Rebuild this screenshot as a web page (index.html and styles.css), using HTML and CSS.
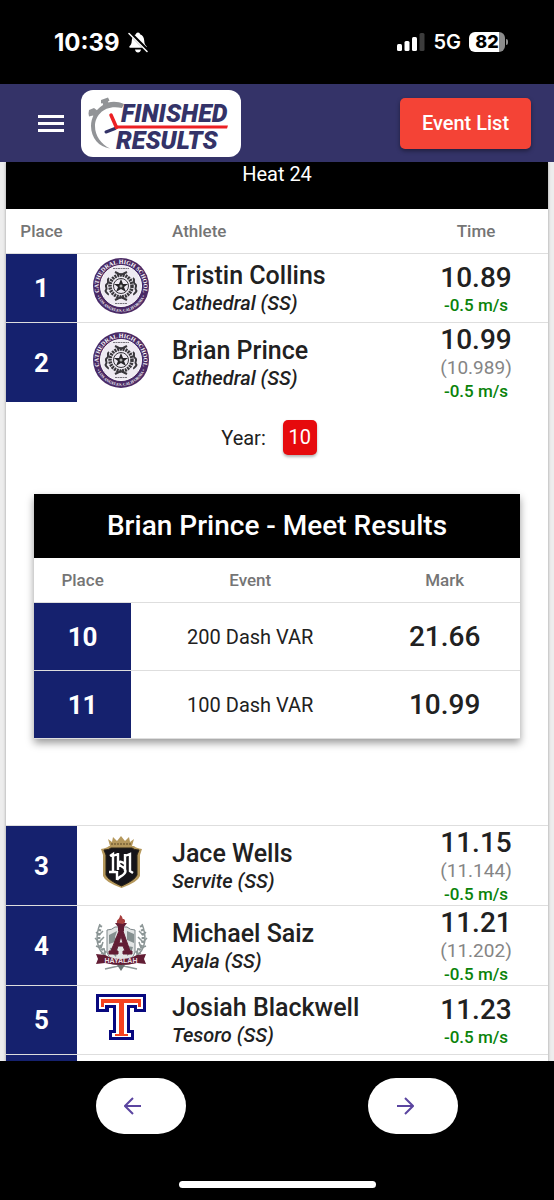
FILE: index.html
```html
<!DOCTYPE html>
<html lang="en">
<head>
<meta charset="utf-8">
<meta name="viewport" content="width=device-width, initial-scale=1">
<title>Finished Results</title>
<link rel="stylesheet" href="styles.css">
</head>
<body class="app">
<div class="status">
  <div class="status-side">
    <span class="clock">10:39</span>
    <svg class="bell" viewBox="0 0 20 21" aria-hidden="true">
      <path fill="#fff" d="M10 0.500c1.400 0 1.800.8 2 1.700 3 1 4 3.300 4.200 6.300.2 3.500 1 4.300 2.300 5.700.5.7.2 1.500-.7 1.500H2.200c-.9 0-1.200-.8-.7-1.500C2.800 12.800 3.600 12 3.800 8.500 4 5.500 5 3.200 8 2.200c.2-.9.600-1.700 2-1.700zM7 17.500h6c-.3 2-1.500 3-3 3s-2.700-1-3-3z"/>
      <path stroke="#000" stroke-width="3.500" d="M1 0l19 19"/>
      <path stroke="#fff" stroke-width="1.500" stroke-linecap="round" d="M1 1.500l18 18"/>
    </svg>
  </div>
  <div class="status-side">
    <svg class="signal" viewBox="0 0 28 18" aria-hidden="true">
      <g fill="#fff"><rect y="11" width="5" height="7" rx="1.500"/><rect x="7.500" y="8" width="5" height="10" rx="1.500"/><rect x="15" y="4" width="5" height="14" rx="1.500"/></g>
      <rect x="22.500" width="5" height="18" rx="1.500" fill="#3c3c3c"/>
    </svg>
    <span class="network">5G</span>
    <span class="battery"><span class="battery-level">82</span></span>
  </div>
</div>
<header class="topbar">
  <button class="menu" aria-label="Menu"><span></span><span></span><span></span></button>
  <a class="brand" href="#" aria-label="Finished Results">
    <svg class="brand-art" viewBox="0 0 160 67">
      <path fill="#929497" d="M43 14C36 11 28 11 22 15 14 20 10 28 10 36c0 12 8 21 19 22.500C20 54 14 46 14 36 14 25 24 14 41 18z"/>
      <path fill="#929497" d="M20 10l7-2.500 1.500 3-1.500 1 1 4-5 2-1.500-4.500-1.500.500zM8 20l5-2 2 1.500 3 2.500-4 5-2-1.500-4 1-.5-3z"/>
      <path stroke="#343368" stroke-width="3" stroke-linecap="round" d="M25 42l9-3.500"/>
      <path fill="none" stroke="#ec2024" stroke-width="3.500" stroke-linecap="round" d="M30 25l5.500 12.500"/>
      <path fill="#ec2024" d="M34 35.500h113l-1 3H34z"/>
      <text class="brand-text" x="40" y="32">FINISHED</text>
      <text class="brand-text" x="35" y="59">RESULTS</text>
    </svg>
  </a>
  <button class="event-list">Event List</button>
</header>
<main class="content">
  <section class="card">
    <h1 class="heat">Heat 24</h1>
    <table class="results">
      <colgroup><col class="col-place"><col class="col-logo"><col><col class="col-time"></colgroup>
      <thead><tr><th>Place</th><th></th><th class="left">Athlete</th><th>Time</th></tr></thead>
      <tbody>
      <tr class="row">
        <td class="place">1</td>
        <td class="logo"><svg viewBox="0 0 56 56" role="img" aria-label="Cathedral High School">
          <defs><g id="cathedral">
            <path id="arc-top" fill="none" d="M6.500 35A22.500 22.500 0 1 1 49.500 35"/>
            <path id="arc-bottom" fill="none" d="M3 35A26 26 0 0 0 53 35"/>
            <circle cx="28" cy="28" r="28" fill="#4a2a65"/>
            <circle cx="28" cy="28" r="20.500" fill="#eeeaf2" stroke="#fff"/>
            <text class="seal-top"><textPath href="#arc-top" startOffset="50%">CATHEDRAL HIGH SCHOOL</textPath></text>
            <text class="seal-bottom"><textPath href="#arc-bottom" startOffset="50%">• LOS ANGELES, CALIFORNIA •</textPath></text>
            <g fill="none" stroke="#39373c">
              <path stroke="#77747c" stroke-dasharray="2 .5" d="M20 10.500h16M22 45.500h12"/>
              <circle cx="28" cy="28" r="11" stroke-width="3.500" stroke-dasharray="2 .8"/>
              <circle cx="28" cy="28" r="7.500" stroke-width="1"/>
              <path stroke-width="2" d="M16 20c-3 2 1 4-2 6s1 4-1 6 3 3 2 5M40 20c3 2-1 4 2 6s-1 4 1 6-3 3-2 5M22 14l6 3 6-3M22 42l6-3 6 3"/>
            </g>
            <path fill="#262528" d="M28 21l2 5h5l-4 3 2 5-5-3-5 3 2-5-4-3h5z"/>
            <circle cx="28" cy="28" r="1.500" fill="#aaa"/>
          </g></defs>
          <use href="#cathedral"/>
        </svg></td>
        <td class="athlete"><div class="name">Tristin Collins</div><div class="school">Cathedral (SS)</div></td>
        <td class="time"><div class="mark">10.89</div><div class="wind">-0.5 m/s</div></td>
      </tr>
      <tr class="row open">
        <td class="place">2</td>
        <td class="logo"><svg viewBox="0 0 56 56" role="img" aria-label="Cathedral High School"><use href="#cathedral"/></svg></td>
        <td class="athlete"><div class="name">Brian Prince</div><div class="school">Cathedral (SS)</div></td>
        <td class="time"><div class="mark">10.99</div><div class="exact">(10.989)</div><div class="wind">-0.5 m/s</div></td>
      </tr>
      <tr>
        <td class="detail" colspan="4">
          <div class="year"><span>Year:</span><span class="badge">10</span></div>
          <section class="meet">
            <h2 class="meet-title">Brian Prince - Meet Results</h2>
            <table class="meet-table">
              <colgroup><col class="col-meet-place"><col><col class="col-mark"></colgroup>
              <thead><tr><th>Place</th><th>Event</th><th>Mark</th></tr></thead>
              <tbody>
                <tr><td class="place">10</td><td class="event">200 Dash VAR</td><td class="mark">21.66</td></tr>
                <tr><td class="place">11</td><td class="event">100 Dash VAR</td><td class="mark">10.99</td></tr>
              </tbody>
            </table>
          </section>
        </td>
      </tr>
      <tr class="row">
        <td class="place">3</td>
        <td class="logo"><svg viewBox="0 0 56 56" role="img" aria-label="Servite">
          <path fill="#b5985c" d="M17 11l-2-7 4 3 1-5 4 4 4-5 4 5 4-4 1 5 4-3-2 7z"/>
          <path stroke="#5c4824" stroke-dasharray="2 1" d="M18 9h20"/>
          <path fill="#b5985c" d="M8 14q6-1 8-3h25q2 2 8 3l-2 6v21q-2 6-18.500 12Q12 47 10 41V20z"/>
          <path fill="#151419" stroke="#292217" d="M11 15q5 0 7-2h21q2 2 7 2l-2 5v20q-2 5-15.500 11Q15 45 13 40V20z"/>
          <path fill="none" stroke="#fff" stroke-width="2.400" d="M17 21l3-2v18M16 37h7M25 18v17M20 21l5-2M32 19v17M32 21l5-2v17l3 2M32 29c-6-5-8 0-4 2s6 5 3 8-6 3-7 6M24 36v9"/>
        </svg></td>
        <td class="athlete"><div class="name">Jace Wells</div><div class="school">Servite (SS)</div></td>
        <td class="time"><div class="mark">11.15</div><div class="exact">(11.144)</div><div class="wind">-0.5 m/s</div></td>
      </tr>
      <tr class="row">
        <td class="place">4</td>
        <td class="logo"><svg viewBox="0 0 56 56" role="img" aria-label="Ayala">
          <g fill="none" stroke="#8c9696" stroke-width="1.500">
            <path d="M15 43C1 34 3 19 7 9M41 43C55 34 53 19 49 9"/>
            <path stroke-width="3" stroke-dasharray="2 2" d="M13 38C4 30 5 20 8 10M43 38c9-8 8-18 5-28"/>
            <path d="M3 17l3 3 4-4M2 23l4 4 5-5M3 31l5 2 2-6M8 38l4 1-1-6M53 17l-3 3-4-4M54 23l-4 4-5-5M53 31l-5 2-2-6M48 38l-4 1 1-6M13 47l31 7M43 47l-31 7"/>
          </g>
          <path fill="#e2e5e5" stroke="#7c8588" d="M14 15q5 0 8-3h12q3 3 8 3v22q-2 8-14 14-12-6-14-14z"/>
          <path fill="#859090" d="M16 20l8-4-2 6 3 4-9 3zM34 16l7 3v9l-7-3zM17 33l8-1-2 10-5-5zM34 31l6 1-2 6-4 3z"/>
          <path fill="#621d34" d="M26 16h4l7 20h2v3H30v-3h2l-2-5h-5l-2 5h2v3h-9v-3h2zm2 5l-2 7h4z" fill-rule="evenodd" stroke="#621d34" stroke-width="1"/>
          <path fill="#621d34" d="M22 8h12l-3 4v4h-6v-4z"/>
          <path fill="#a8403f" d="M24 8c-1-4 3-3 3-8 4 2 1 4 4 4 2 2 1 4-1 5z"/>
          <path fill="#621d34" d="M3 39l9 1 4 2q12 4 24 0l4-2 9-1-2 5 2 5-9-1q-16 4-32 0l-9 1 2-5z"/>
          <text class="ribbon" x="28" y="48">HAYALAH</text>
          <path fill="#6b7474" d="M24 50l4 6 4-6z"/>
        </svg></td>
        <td class="athlete"><div class="name">Michael Saiz</div><div class="school">Ayala (SS)</div></td>
        <td class="time"><div class="mark">11.21</div><div class="exact">(11.202)</div><div class="wind">-0.5 m/s</div></td>
      </tr>
      <tr class="row">
        <td class="place">5</td>
        <td class="logo"><svg viewBox="0 0 56 56" role="img" aria-label="Tesoro">
          <path fill="#08087f" d="M3 4h50v18H41v-4h-4v22h4v10H16V40h4V18h-4v4H3z"/>
          <path fill="#fff" d="M6 7h44v12h-6v-4H34v28h4v4H19v-4h4V15H12v4H6z"/>
          <path fill="#f5411e" d="M8 9h40v8h-3v-4H31v31h4v2H22v-2h4V13H11v4H8z"/>
        </svg></td>
        <td class="athlete"><div class="name">Josiah Blackwell</div><div class="school">Tesoro (SS)</div></td>
        <td class="time"><div class="mark">11.23</div><div class="wind">-0.5 m/s</div></td>
      </tr>
      <tr class="row"><td class="place"></td><td></td><td></td><td></td></tr>
      </tbody>
    </table>
  </section>
</main>
<footer class="bottom">
  <nav class="pager">
    <button class="page-button" aria-label="Previous"><svg viewBox="0 0 18 18"><path d="M17 9H2M9 1L1 9l8 8"/></svg></button>
    <button class="page-button" aria-label="Next"><svg viewBox="0 0 18 18"><path d="M1 9h15M9 1l8 8-8 8"/></svg></button>
  </nav>
  <div class="home-bar"></div>
</footer>
</body>
</html>
```
FILE: styles.css
```css
* { box-sizing: border-box; }

.app {
  margin: 0;
  height: 100vh;
  display: flex;
  flex-direction: column;
  overflow: hidden;
  background: #000;
  color: #212121;
  font-family: Roboto, "Liberation Sans", sans-serif;
  font-size: 20px;
}

button { border: 0; padding: 0; font: inherit; cursor: pointer; }
table { width: 100%; border-collapse: separate; border-spacing: 0; table-layout: fixed; }
th, td { padding: 0; border-bottom: 1px solid #dedede; text-align: center; vertical-align: middle; }

/* Phone status bar */
.status {
  flex: none;
  height: 84px;
  padding: 0 49px 0 54px;
  display: flex;
  align-items: center;
  justify-content: space-between;
  color: #fff;
  font-family: Inter, sans-serif;
}
.status-side { display: flex; align-items: center; gap: 8px; }
.clock { font-size: 24px; font-weight: 700; }
.bell { width: 20px; height: 21px; }
.signal { width: 28px; height: 18px; }
.network { font-weight: 600; }
.battery {
  position: relative;
  width: 36px;
  height: 20px;
  border-radius: 6px;
  background: linear-gradient(90deg, #fff 82%, #8c8c8c 82%);
  color: #000;
  text-align: center;
}
.battery-level { display: block; font-size: 18px; line-height: 20px; font-weight: 800; }
.battery::after {
  content: "";
  position: absolute;
  left: 100%;
  top: 7px;
  width: 2px;
  height: 6px;
  margin-left: 1px;
  border-radius: 0 2px 2px 0;
  background: #8c8c8c;
}

/* App bar */
.topbar {
  flex: none;
  height: 78px;
  padding: 0 23px 0 38px;
  display: flex;
  align-items: center;
  background: #343368;
}
.menu { width: 26px; display: grid; gap: 4px; background: none; }
.menu span { height: 3px; background: #fff; }
.brand { margin: 0 auto 0 17px; height: 67px; width: 160px; border-radius: 12px; background: #fff; }
.brand-art { display: block; width: 100%; height: 100%; }
.brand-text { font: italic 900 25px Roboto, sans-serif; fill: #343368; }
.event-list {
  width: 131px;
  height: 51px;
  border-radius: 5px;
  background: #f44336;
  color: #fff;
  font-weight: 500;
  box-shadow: 0 2px 4px rgba(0, 0, 0, .4);
}

/* Results card */
.content { flex: 1; min-height: 0; overflow: hidden; padding: 0 6px; background: #ededed; }
.card { background: #fff; box-shadow: 0 0 3px rgba(0, 0, 0, .35); }
.heat {
  margin: 0;
  height: 47px;
  background: #000;
  color: #fff;
  font-size: 20px;
  line-height: 24px;
  font-weight: 400;
  text-align: center;
}
th { height: 45px; color: #757575; font-size: 17px; font-weight: 500; }
.left { text-align: left; }
.col-place { width: 71px; }
.col-logo { width: 95px; }
.col-time { width: 144px; }
.row td { height: 69px; }
.row.open td { border-bottom: 0; }
.place { background: #15216e; color: #fff; font-size: 26px; font-weight: 700; }
.logo svg { display: block; width: 56px; height: 56px; margin: 0 0 5px 16px; }
.athlete { text-align: left; }
.name { font-size: 25px; line-height: 30px; font-weight: 500; }
.school { font-size: 20px; line-height: 24px; font-weight: 500; font-style: italic; }
.mark { font-size: 28px; line-height: 33px; font-weight: 500; }
.exact { font-size: 19px; line-height: 24px; color: #858585; }
.wind { font-size: 17px; line-height: 22px; font-weight: 500; color: #0a830a; }

.seal-top { font: 700 6px "Liberation Serif", serif; fill: #fff; text-anchor: middle; }
.seal-bottom { font: 700 4px "Liberation Serif", serif; fill: #fff; text-anchor: middle; }
.ribbon { font: 700 7px "Liberation Sans", sans-serif; fill: #e9dfe2; text-anchor: middle; }

/* Expanded athlete */
.detail { padding: 18px 28px 86px; }
.year {
  display: flex;
  align-items: center;
  justify-content: center;
  gap: 17px;
  margin-bottom: 39px;
  padding-right: 16px;
}
.badge {
  min-width: 34px;
  height: 35px;
  border-radius: 5px;
  background: #e60a0d;
  color: #fff;
  line-height: 35px;
  box-shadow: 0 2px 3px rgba(0, 0, 0, .3);
}
.meet { box-shadow: 0 4px 8px rgba(0, 0, 0, .4); }
.meet-title { margin: 0; background: #000; color: #fff; font-size: 28px; line-height: 64px; font-weight: 500; }
.meet-table td { height: 68px; }
.col-meet-place { width: 20%; }
.col-mark { width: 31%; }
.event { font-size: 20px; }

/* Bottom navigation */
.bottom { flex: none; padding: 17px 0 12px; }
.pager { display: flex; justify-content: space-around; padding: 0 5px; }
.page-button {
  width: 90px;
  height: 56px;
  padding-right: 16px;
  border-radius: 28px;
  background: #fff;
}
.page-button svg {
  display: block;
  width: 18px;
  height: 18px;
  margin: 0 auto;
  fill: none;
  stroke: #5b45a0;
  stroke-width: 2;
}
.home-bar { width: 197px; height: 7px; margin: 47px auto 0; border-radius: 4px; background: #fff; }
```
